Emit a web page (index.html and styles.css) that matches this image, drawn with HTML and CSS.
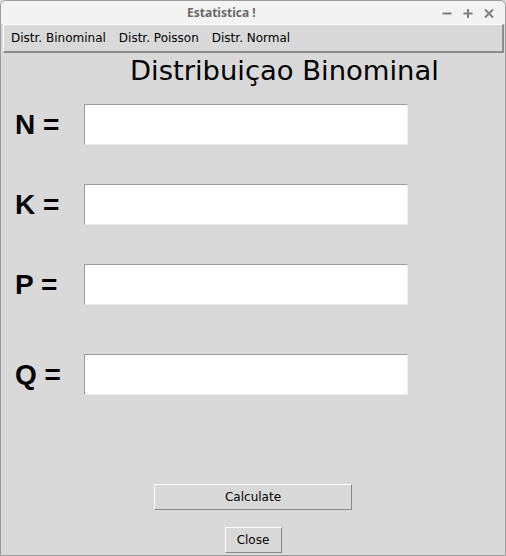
FILE: index.html
```html
<!DOCTYPE html>
<html>
<head>
<meta charset="utf-8">
<link rel="stylesheet" href="styles.css">
</head>
<body>
<div class="window">
  <div class="titlebar">
    <span class="title">Estatistica !</span>
    <div class="controls">
      <svg class="ctl" width="12" height="12" viewBox="0 0 12 12"><path d="M1.5 6.5h9" stroke="#808080" stroke-width="2"/></svg>
      <svg class="ctl" width="12" height="12" viewBox="0 0 12 12"><path d="M1.5 6.5h9M6 2v9" stroke="#808080" stroke-width="2"/></svg>
      <svg class="ctl" width="12" height="12" viewBox="0 0 12 12"><path d="M2 2.5l8 8M10 2.5l-8 8" stroke="#808080" stroke-width="2"/></svg>
    </div>
  </div>
  <div class="menubar">
    <span class="menu-item">Distr. Binominal</span>
    <span class="menu-item">Distr. Poisson</span>
    <span class="menu-item">Distr. Normal</span>
  </div>
  <h1 class="heading">Distribuiçao Binominal</h1>
  <div class="form">
    <div class="row"><span class="label">N =</span><div class="entry"></div></div>
    <div class="row"><span class="label">K =</span><div class="entry"></div></div>
    <div class="row"><span class="label">P =</span><div class="entry"></div></div>
    <div class="row row-q"><span class="label">Q =</span><div class="entry"></div></div>
  </div>
  <div class="buttons">
    <button class="btn btn-calc">Calculate</button>
    <button class="btn btn-close">Close</button>
  </div>
</div>
</body>
</html>
```
FILE: styles.css
```css
html, body {
  margin: 0;
  padding: 0;
  background: #d9d9d9;
}
.window {
  width: 506px;
  height: 556px;
  box-sizing: border-box;
  border: 1px solid #9c9c9c;
  border-radius: 6px 6px 0 0;
  background: #d9d9d9;
  overflow: hidden;
  display: flex;
  flex-direction: column;
}
.titlebar {
  height: 23px;
  background: #f3f3f3;
  display: flex;
  align-items: center;
}
.title {
  margin-left: 186px;
  font-family: "Noto Sans", sans-serif;
  font-weight: bold;
  font-size: 12px;
  color: #6a6a6a;
}
.controls {
  margin-left: auto;
  margin-right: 10px;
  display: flex;
  gap: 9px;
  align-items: center;
}
.ctl {
  display: block;
}
.menubar {
  height: 29px;
  box-sizing: border-box;
  margin: 0 1px 0 2px;
  border-top: 1px solid #ffffff;
  border-left: 1px solid #ffffff;
  border-bottom: 2px solid #8c8c8c;
  border-right: 2px solid #8c8c8c;
  display: flex;
  align-items: center;
  padding-left: 7px;
  gap: 13px;
  font-family: "DejaVu Sans", sans-serif;
  font-size: 12px;
  color: #000;
}
.heading {
  margin: 2px 0 0 0;
  padding-left: 129px;
  font-family: "DejaVu Sans", sans-serif;
  font-weight: normal;
  font-size: 27.4px;
  line-height: 31px;
  color: #000;
}
.form {
  margin-top: 18px;
  display: flex;
  flex-direction: column;
  gap: 39px;
}
.row {
  display: grid;
  grid-template-columns: 83px 324px;
  align-items: center;
  height: 41px;
}
.row-q {
  margin-top: 10px;
}
.label {
  padding-left: 14px;
  font-family: "Liberation Sans", Arial, sans-serif;
  font-weight: bold;
  font-size: 28px;
  color: #000;
}
.entry {
  height: 41px;
  box-sizing: border-box;
  background: #ffffff;
  border-top: 1px solid #9a9a9a;
  border-left: 1px solid #9a9a9a;
  border-bottom: 1px solid #ececec;
  border-right: 1px solid #ececec;
}
.buttons {
  margin-top: 89px;
  display: flex;
  flex-direction: column;
  align-items: center;
  gap: 17px;
}
.btn {
  height: 26px;
  box-sizing: border-box;
  background: #d9d9d9;
  border-top: 1px solid #ffffff;
  border-left: 1px solid #ffffff;
  border-bottom: 1px solid #8a8a8a;
  border-right: 1px solid #8a8a8a;
  font-family: "DejaVu Sans", sans-serif;
  font-size: 12px;
  color: #000;
  padding: 0;
  margin: 0;
}
.btn-calc {
  width: 198px;
}
.btn-close {
  width: 57px;
}
```
